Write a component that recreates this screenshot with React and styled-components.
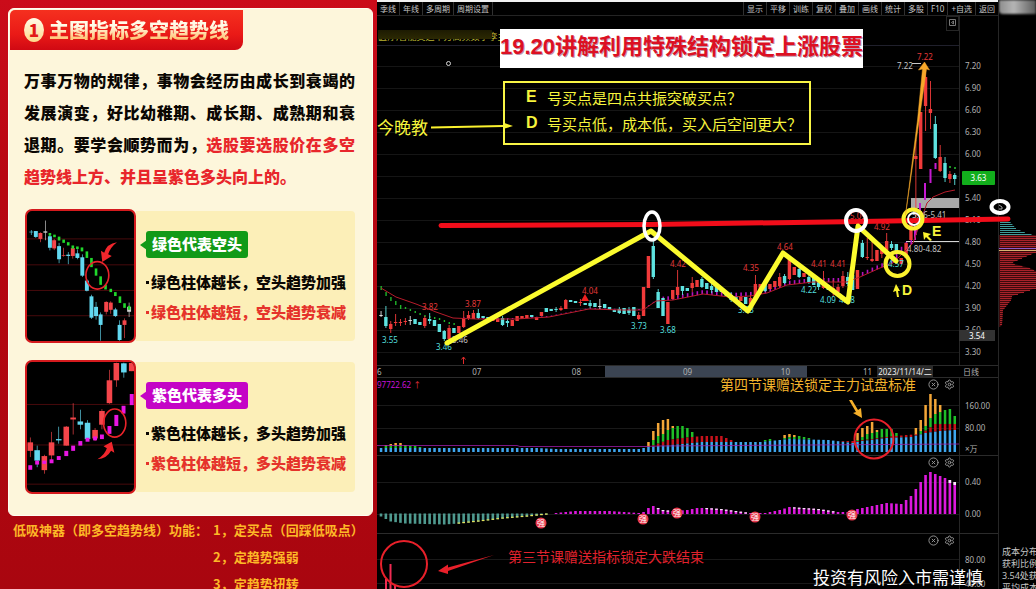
import React from "react";
import styled, { createGlobalStyle, css } from "styled-components";
import { CircleX, Settings } from "lucide-react";

const sans = '"Noto Sans", "Noto Sans CJK SC", sans-serif';
const cjk = '"Noto Sans CJK SC", "Noto Sans", sans-serif';

const GlobalStyle = createGlobalStyle`
  * { box-sizing: border-box; }
  body { margin: 0; background: #000; font-family: ${cjk}; }
  h1, h2, p, ul, ol { margin: 0; padding: 0; }
  button { font: inherit; border: 0; background: none; padding: 0; margin: 0; cursor: pointer; }
`;

const Page = styled.main`
  display: grid;
  grid-template-columns: 377px minmax(0, 1fr);
  height: 100vh;
  overflow: hidden;
`;

/* ---------- lesson column ---------- */

const Lesson = styled.section`
  padding: 8px 4px 0 8px;
  background: linear-gradient(#cb0c1a, #b80712 30%, #a9060f);
  overflow: hidden;
`;

const Card = styled.article`
  height: 508px;
  border: 1px solid #fffdf2;
  border-radius: 6px;
  background: #fdf6db;
  padding: 1px 17px 0 1px;
`;

const Heading = styled.h1`
  display: flex;
  align-items: center;
  gap: 5px;
  width: 233px;
  height: 40px;
  padding-left: 14px;
  border-radius: 5px 0 8px 0;
  background: linear-gradient(#f5301f, #ea1a17 60%, #d00913);
  font-size: 20px;
  font-weight: 900;
  line-height: 30px;
`;

const HeadingNumber = styled.span`
  width: 20px;
  height: 24px;
  border-radius: 50%;
  background: linear-gradient(#fffbe8, #ffd98c);
  color: #e31a17;
  font-size: 17px;
  line-height: 24px;
  text-align: center;
`;

const HeadingText = styled.span`
  background: linear-gradient(#fffbe8 35%, #ffc576 80%);
  background-clip: text;
  -webkit-background-clip: text;
  color: transparent;
`;

const Lead = styled.p`
  margin: 14px 0 17px 14px;
  font-size: 16px;
  line-height: 32px;
  font-weight: 900;
  color: #0b0703;
  text-align: justify;
`;

const Red = styled.strong`
  font-weight: 900;
  color: #e8262b;
`;

const Signal = styled.section`
  display: flex;
  align-items: center;
  height: 134px;
  margin: 0 0 17px 15px;
`;

const Thumb = styled.svg`
  flex: none;
  width: 111px;
  height: 134px;
  border: 2px solid #d41a1d;
  border-radius: 7px;
  background: #000;
`;

const SignalBody = styled.div`
  flex: 1;
  height: 130px;
  padding: 20px 0 0 10px;
  border-radius: 0 4px 4px 0;
  background: #fcefb8;
`;

const Tag = styled.h2`
  position: relative;
  width: 102px;
  height: 27px;
  border-radius: 3px;
  background: ${(p) => p.$color};
  color: #fff;
  font-size: 15px;
  line-height: 26px;
  font-weight: 900;
  text-align: center;
  &::before {
    content: "";
    position: absolute;
    left: -6px;
    top: 9px;
    border: solid transparent;
    border-width: 5px 7px 5px 0;
    border-right-color: ${(p) => p.$color};
  }
`;

const Bullets = styled.ul`
  margin-top: 9px;
  list-style: none;
  font-size: 15px;
  line-height: 30px;
  font-weight: 900;
  white-space: nowrap;
`;

const Bullet = styled.li`
  display: flex;
  align-items: center;
  gap: 2px;
  color: ${(p) => (p.$weak ? "#e5332b" : "#0b0703")};
  &::before {
    content: "";
    width: 3px;
    height: 3px;
    background: currentColor;
  }
`;

const Features = styled.footer`
  display: flex;
  gap: 5px;
  padding-left: 5px;
  color: #fdb827;
  font-size: 13px;
  line-height: 27px;
  font-weight: 700;
  white-space: nowrap;
`;

const FeatureList = styled.ol`
  list-style: none;
`;

/* ---------- trading terminal ---------- */

const Board = styled.section`
  position: relative;
  display: grid;
  grid-template-columns: minmax(0, 1fr) 37px;
  background: #000;
  font-family: ${sans};
  font-size: 8px;
  color: #b0b0b0;
  overflow: hidden;
`;

const Terminal = styled.div`
  display: flex;
  flex-direction: column;
  border-right: 1px solid #262626;
`;

const Toolbar = styled.nav`
  display: flex;
  justify-content: space-between;
  height: 16px;
  border-top: 2px solid #f2f2f2;
  border-bottom: 1px solid #242424;
`;

const ToolGroup = styled.div`
  display: flex;
`;

const ToolButton = styled.button`
  padding: 0 3px;
  border-${(p) => p.$side}: 1px solid #303030;
  color: #c4c4c4;
  line-height: 12px;
  white-space: nowrap;
`;

const Pane = styled.div`
  position: relative;
  flex: none;
  display: grid;
  grid-template-columns: minmax(0, 1fr) 39px;
  height: ${(p) => p.$height}px;
  border-bottom: 1px solid #2b2b2b;
`;

const Plot = styled.svg`
  display: block;
  width: 100%;
  height: 100%;
  font-family: ${sans};
  font-size: 8px;
`;

const Axis = styled.div`
  display: flex;
  flex-direction: column;
  padding: ${(p) => p.$top}px 0 0 5px;
  border-left: 1px solid #262626;
  line-height: 12px;
  overflow: hidden;
`;

const Tick = styled.span`
  flex: none;
  height: ${(p) => p.$step}px;
`;

const PriceTag = styled.span`
  position: absolute;
  right: 3px;
  top: ${(p) => p.$top}px;
  width: ${(p) => (p.$live ? 33 : 36)}px;
  height: ${(p) => (p.$live ? 14 : 11)}px;
  border-radius: ${(p) => (p.$live ? 1 : 0)}px;
  background: ${(p) => (p.$live ? "#12ae1c" : "#333")};
  color: #fff;
  line-height: ${(p) => (p.$live ? 14 : 11)}px;
  text-align: center;
`;

const Expand = styled.button`
  position: absolute;
  right: 39px;
  top: 0;
  width: 13px;
  height: 15px;
  border: 1px solid #262626;
  color: #777;
`;

const Dates = styled.div`
  flex: none;
  display: grid;
  grid-template-columns: 228px 202px minmax(0, 1fr) 39px;
  height: 12px;
  border-bottom: 1px solid #2b2b2b;
  line-height: 11px;
`;

const Months = styled.div`
  display: flex;
  justify-content: ${(p) => p.$align || "space-between"};
  gap: ${(p) => p.$gap || 0}px;
  padding: ${(p) => p.$pad};
  background: ${(p) => (p.$selected ? "#3b4452" : "transparent")};
  white-space: nowrap;
`;

const Today = styled.time`
  padding: 0 1px;
  background: #2b2b2b;
  color: #eee;
`;

const PaneTools = styled.div`
  position: absolute;
  right: 43px;
  top: 1px;
  display: flex;
  gap: 5px;
  button { width: 11px; height: 11px; color: #9a9a9a; }
  svg { display: block; }
`;

const Readout = styled.span`
  position: absolute;
  left: 0;
  top: 1px;
  color: #c713d6;
  line-height: 12px;
  b { color: #e0303a; font-weight: 400; }
`;

const Side = styled.aside`
  display: flex;
  flex-direction: column;
  overflow: hidden;
`;

const Blurred = styled.div`
  height: 14px;
  border-radius: 0 0 0 4px;
  background: linear-gradient(90deg, #8d8d8d, #b5b5b5 40%, #5c5c5c);
  filter: blur(1px);
`;

const Profile = styled.svg`
  display: block;
  width: 37px;
  height: 532px;
`;

const Stats = styled.p`
  padding-left: 3px;
  color: #c4c4c4;
  font-size: 9px;
  line-height: 12px;
  white-space: nowrap;
`;

const Overlay = styled.svg`
  position: absolute;
  left: 0;
  top: 0;
  width: 659px;
  height: 589px;
  pointer-events: none;
`;

const tones = { yellow: "#f6f43c", gold: "#f2b32c", red: "#e0222d", white: "#fff" };

const Note = styled.p`
  position: absolute;
  left: ${(p) => p.$x}px;
  top: ${(p) => p.$y}px;
  color: ${(p) => tones[p.$tone]};
  font-family: ${cjk};
  font-size: ${(p) => p.$size}px;
  line-height: 20px;
  white-space: nowrap;
  ${(p) => p.$bold && css`font-family: "Liberation Sans", sans-serif; font-weight: 700;`}
`;

const Banner = styled.h2`
  position: absolute;
  left: 123px;
  top: 29px;
  height: 39px;
  background: #fff;
  color: #dc1023;
  font-family: "Liberation Sans", "Noto Sans CJK SC", sans-serif;
  font-size: 22px;
  line-height: 35px;
  font-weight: 700;
  text-shadow: 1px 1px 0 rgba(110, 20, 70, 0.45);
  white-space: nowrap;
`;

const Ticker = styled.p`
  position: absolute;
  left: 1px;
  top: 30px;
  width: 122px;
  overflow: hidden;
  color: #b9b430;
  font-size: 9px;
  line-height: 14px;
  white-space: nowrap;
  &::after {
    content: "";
    position: absolute;
    inset: 0 8px 5px 0;
    background: linear-gradient(#1d1b02, #2c2903);
  }
`;

const Callout = styled.dl`
  position: absolute;
  left: 126px;
  top: 81px;
  width: 308px;
  height: 64px;
  display: grid;
  grid-template-columns: 21px 1fr;
  grid-auto-rows: 26px;
  margin: 0;
  padding: 2px 0 0 21px;
  border: 2px solid #f8f545;
  color: #f6f43c;
  font-size: 15px;
  line-height: 26px;
  font-family: ${cjk};
  white-space: nowrap;
  dt { font-family: "Liberation Sans", sans-serif; font-weight: 700; font-size: 16px; line-height: 24px; }
  dd { margin: 0; }
`;

/* ---------- data ---------- */

const RED = "#f03a3a";
const CYAN = "#5ee3e0";
const PITCH = 4.862;
const barX = (i) => 381 + PITCH * i;

/* tone, body top, body bottom, wick top, wick bottom */
const candles = [
  ["w", 315, 316, 311, 317], ["c", 317, 326, 306, 328], ["r", 324, 329, 321, 333], ["r", 322, 323, 314, 326],
  ["r", 322, 323, 319, 326], ["r", 321, 322, 318, 325], ["w", 320, 321, 316, 325], ["c", 319, 324], ["c", 322, 325],
  ["r", 318, 326, 316, 328], ["c", 319, 321, 313, 324], ["c", 320, 326], ["c", 324, 332], ["c", 331, 339, 330, 341],
  ["r", 328, 339, 325, 341], ["c", 328, 333], ["r", 326, 333], ["r", 318, 327, 311, 328], ["r", 315, 318, 311, 320],
  ["r", 313, 319, 310, 319], ["c", 313, 318, 309, 319], ["c", 316, 318], ["c", 317, 320], ["r", 318, 321], ["r", 319, 322],
  ["c", 318, 325, 316, 326], ["c", 321, 323, 319, 327], ["r", 320, 326], ["r", 316, 321], ["r", 316, 319], ["r", 315, 318],
  ["c", 315, 317], ["r", 317, 320], ["r", 312, 316], ["c", 308, 312], ["c", 309, 311], ["c", 309, 310, 307, 312],
  ["r", 308, 310, 306, 311], ["r", 300, 309, 299, 309], ["c", 300, 302], ["c", 301, 303], ["r", 302, 303, 299, 306],
  ["c", 303, 305], ["c", 303, 306, 300, 308], ["c", 303, 307], ["w", 306, 307, 299, 309], ["c", 304, 308], ["c", 307, 310],
  ["c", 310, 312], ["c", 309, 313, 307, 314], ["c", 308, 314], ["c", 310, 313, 307, 315], ["c", 307, 316], ["r", 315, 319, 312, 320],
  ["r", 287, 316], ["r", 256, 288], ["c", 246, 277, 240, 279], ["c", 292, 308, 289, 308], ["c", 298, 316], ["r", 302, 324],
  ["r", 290, 299], ["r", 287, 295, 270, 297], ["c", 286, 291, 286, 295], ["c", 288, 291], ["r", 283, 288, 277, 292],
  ["r", 280, 287], ["c", 279, 287, 277, 288],
  ["c", 283, 289], ["c", 286, 290, 284, 293], ["c", 287, 292], ["c", 288, 292], ["c", 292, 296], ["c", 295, 300, 292, 302],
  ["c", 296, 300], ["r", 296, 301], ["c", 297, 304], ["r", 298, 304, 295, 305], ["r", 284, 299, 275, 300], ["r", 284, 294],
  ["c", 283, 291, 280, 292], ["r", 284, 289], ["r", 281, 287], ["r", 277, 286, 273, 288], ["c", 276, 283, 274, 284],
  ["r", 259, 279, 257, 280], ["r", 267, 275], ["c", 269, 277, 267, 278], ["r", 273, 277], ["c", 277, 282, 272, 284],
  ["c", 277, 285], ["c", 281, 287, 279, 290], ["r", 284, 288, 271, 289], ["c", 285, 290], ["r", 288, 292, 280, 297],
  ["r", 287, 292, 284, 295], ["r", 276, 286, 271, 288], ["c", 277, 284, 272, 286], ["c", 275, 290], ["r", 270, 289],
  ["c", 243, 257, 240, 258], ["r", 257, 258, 238, 260], ["r", 259, 261, 240, 262], ["r", 250, 261], ["r", 248, 254, 245, 258],
  ["r", 241, 250, 233, 252], ["c", 244, 248, 241, 250], ["c", 244, 253], ["r", 258, 264], ["r", 243, 258], ["r", 223, 240],
  ["r", 156, 159, 140, 222], ["r", 112, 169], ["r", 77, 106, 70, 131], ["r", 109, 113, 81, 129], ["c", 124, 158, 116, 159],
  ["r", 157, 171, 145, 172], ["c", 163, 178, 157, 182], ["r", 174, 179, 171, 183], ["c", 175, 179, 173, 185],
];

const candleIndex = (n) => (n < 109 ? n : n + (119 - candles.length));

const average = [
  [381, 288], [396, 297], [416, 304], [436, 312], [453, 318], [476, 319], [516, 319], [549, 317], [569, 313], [589, 309],
  [623, 310], [643, 310], [656, 301], [673, 300], [703, 294], [730, 297], [750, 296], [767, 293], [787, 285], [813, 282],
  [847, 282], [860, 277], [880, 268], [893, 263], [913, 243], [920, 223], [927, 203], [933, 197], [945, 192], [955, 190],
];

const lerp = (points, x) => {
  if (x <= points[0][0]) return points[0][1];
  for (let k = 1; k < points.length; k += 1) {
    const [x1, y1] = points[k];
    const [x0, y0] = points[k - 1];
    if (x <= x1) return y0 + ((y1 - y0) * (x - x0)) / (x1 - x0);
  }
  return points[points.length - 1][1];
};

const bearDots = [288, 294, 299, 303, 307, 309, 311, 313, 315, 317, 318, 319, 320, 322, 324, 325];

const priceLabels = [
  ["3.55", 382, 343, "c"], ["3.82", 422, 310, "r"], ["3.87", 465, 307, "r"], ["3.46", 436, 350, "c"], ["3.46", 452, 343, "w"],
  ["4.04", 582, 294, "r"], ["3.73", 631, 329, "c"], ["3.68", 660, 333, "c"], ["4.42", 670, 267, "r"], ["4.35", 743, 271, "r"],
  ["4.64", 777, 250, "r"], ["3.83", 738, 313, "c"], ["4.22", 801, 293, "c"], ["4.41", 811, 267, "r"], ["4.41", 830, 267, "r"],
  ["4.09", 820, 303, "c"], ["4.08", 839, 303, "c"], ["5.09", 850, 219, "r"], ["4.92", 874, 230, "r"], ["4.57", 888, 267, "c"],
  ["7.22", 917, 60, "r"], ["7.22", 897, 69, "w"], ["5.16-5.41", 912, 218, "w"], ["4.80-4.82", 907, 252, "w"],
];
const labelTone = { c: "#54dedd", r: "#e23838", w: "#c4c4c4" };

const blueTop = [[0, 448], [32, 448], [36, 449], [53, 449], [55, 447], [57, 446], [62, 444], [66, 442], [78, 442], [84, 439], [92, 440], [97, 443], [99, 441], [104, 438], [109, 437], [112, 433], [115, 431], [118, 430]];
const redTop = [[54, 449], [59, 440], [62, 438], [66, 436], [70, 436], [73, 442], [90, 441], [98, 441], [104, 437], [108, 435], [111, 434], [114, 424], [118, 424]];
const hasRed = (i) => (i >= 55 && i <= 73) || i >= 90;
const greenTop = { 1: 446, 2: 446, 3: 446, 4: 446, 5: 446, 6: 446, 7: 446, 8: 447, 56: 440, 57: 436, 58: 434, 59: 430, 60: 428, 61: 426, 62: 426, 63: 428, 64: 432, 79: 440, 80: 439, 83: 438, 84: 437, 85: 437, 86: 436, 87: 437, 88: 438, 98: 440, 99: 437, 100: 434, 101: 433, 102: 432, 103: 429, 104: 429, 105: 429, 106: 433, 110: 435, 111: 431, 112: 426, 113: 418, 114: 414, 115: 412, 116: 410, 117: 409, 118: 416 };
const goldTop = { 1: 445, 2: 444, 3: 443, 4: 443, 5: 445, 6: 446, 55: 442, 56: 431, 57: 423, 58: 420, 59: 419, 60: 426, 83: 435, 84: 434, 85: 435, 98: 433, 99: 428, 100: 426, 101: 422, 102: 430, 110: 428, 111: 420, 112: 405, 113: 394, 114: 399, 115: 405 };

const momentum = [[0, -3], [2, -8], [5, -10], [13, -11], [16, -10], [20, -8], [25, -5], [30, -3], [34, -1], [36, 1], [40, 3], [47, 3], [53, 1], [54, 2], [55, 6], [56, 8], [58, 4], [60, 3], [63, 4], [65, 6], [67, 6], [70, 5], [73, 3], [76, 1], [79, 1], [82, 4], [84, 7], [90, 5], [94, 2], [97, 2], [98, 5], [101, 8], [104, 11], [107, 10], [109, 18], [111, 32], [112, 39], [113, 42], [115, 38], [118, 32]];

const indexes = Array.from({ length: 119 }, (_, i) => i);

const profileEdge = [[218, 1], [219, 9], [228, 17], [233, 28], [235, 37], [252, 37], [258, 23], [263, 12], [268, 31], [271, 37], [288, 37], [293, 22], [296, 13], [300, 12], [310, 4], [325, 3], [327, 1]];
const profileRows = Array.from({ length: 53 }, (_, k) => 220 + k * 2);

/* thumbnails: tone, x, body top, body bottom, wick top, wick bottom */
const bearCandles = [
  ["c", 91, 96, 98, 91, 106], ["c", 105, 94, 112, 94, 115], ["r", 119, 100, 118, 98, 128], ["w", 134, 95, 99, 62, 122],
  ["c", 148, 110, 145, 100, 153], ["r", 161, 122, 147, 118, 152], ["c", 176, 140, 180, 130, 192], ["r", 190, 168, 170, 145, 172],
  ["c", 204, 166, 170, 158, 195], ["r", 218, 146, 170, 140, 178], ["c", 232, 162, 176, 150, 180], ["c", 247, 174, 230, 165, 234],
  ["c", 261, 245, 276, 240, 278], ["c", 275, 293, 358, 288, 362], ["c", 289, 325, 353, 310, 364], ["c", 303, 348, 380, 342, 428],
  ["r", 320, 310, 340, 308, 348], ["r", 334, 312, 334, 308, 346], ["c", 348, 333, 353, 328, 356], ["c", 361, 380, 426, 366, 428],
  ["r", 376, 366, 380, 360, 420], ["w", 390, 325, 340, 312, 356],
];
const bearTrail = [[148, 100, 8], [162, 105, 8], [176, 111, 12], [190, 120, 10], [204, 128, 10], [218, 138, 10], [232, 141, 8], [246, 144, 12], [261, 156, 20], [275, 176, 28], [289, 208, 22], [303, 232, 26], [318, 258, 14], [334, 270, 10], [348, 280, 12], [362, 293, 20], [376, 314, 14], [390, 322, 12]];
const bullCandles = [
  ["r", 88, 280, 306, 265, 325], ["c", 109, 304, 336, 290, 356], ["r", 131, 322, 365, 318, 376], ["r", 153, 280, 320, 248, 336],
  ["c", 175, 270, 274, 232, 284], ["r", 198, 232, 290, 230, 290], ["r", 219, 204, 210, 160, 256], ["c", 241, 216, 226, 180, 240],
  ["c", 263, 220, 270, 212, 274], ["r", 286, 242, 268, 236, 276], ["r", 307, 184, 226, 178, 240], ["r", 330, 90, 160, 58, 162],
  ["r", 351, 37, 90, 36, 110], ["c", 374, 38, 66, 36, 82], ["r", 398, 37, 62, 36, 62],
];
const bullTrail = [[88, 350, 14], [109, 336, 12], [131, 336, 10], [153, 332, 12], [175, 322, 12], [198, 306, 16], [219, 290, 16], [241, 276, 14], [263, 266, 12], [286, 262, 12], [307, 256, 14], [330, 230, 24], [351, 196, 34], [373, 168, 24], [398, 132, 34]];

const tone = { r: "#f4454a", c: "#62d8f0", w: "#d0d0d0" };

/* ---------- parts ---------- */

function SignalChart({ label, viewBox, grid, data, body, trail, trailWidth, trailColor, children }) {
  return (
    <Thumb viewBox={viewBox} preserveAspectRatio="none" role="img" aria-label={label}>
      {grid.map((y) => <path key={y} d={`M75 ${y}H408`} stroke="#6d1013" strokeWidth="2" />)}
      {data.map(([t, x, a, b, hi, lo]) => (
        <g key={x} fill={tone[t]}>
          <rect x={x - 1} y={hi} width="2" height={lo - hi} />
          <rect x={x - body / 2} y={a} width={body} height={b - a} />
        </g>
      ))}
      {trail.map(([x, y, h]) => <rect key={x} x={x - trailWidth / 2} y={y} width={trailWidth} height={h} fill={trailColor} />)}
      {children}
    </Thumb>
  );
}

function Tools() {
  return (
    <PaneTools>
      <button type="button" aria-label="关闭指标"><CircleX size={11} strokeWidth={2} /></button>
      <button type="button" aria-label="指标设置"><Settings size={11} strokeWidth={2} /></button>
    </PaneTools>
  );
}

function PricePlot() {
  return (
    <Plot viewBox="377 16 582 350" preserveAspectRatio="xMinYMin slice">
      {Array.from({ length: 14 }, (_, k) => <path key={k} d={`M377 ${66.5 + k * 22}H959`} stroke="#151515" />)}
      <path d="M377 45.5H959" stroke="#20202c" />
      <rect x="911" y="198" width="48" height="10" fill="#a9a9a9" />
      <path d="M906 241.5H959" stroke="#d6d6d6" />
      {bearDots.map((y, i) => <rect key={i} x={barX(i) - 0.5} y={y - 2} width="1.4" height={i < 5 ? 4 : 2} fill="#1fb52a" />)}
      {indexes.slice(17, 111).map((i) => {
        const h = i > 104 ? 8 : i > 56 ? 4 : 1;
        return <rect key={i} x={barX(i) - 0.5} y={lerp(average, barX(i)) - h} width="1.6" height={h} fill="#b312bf" />;
      })}
      <path d="M925 183V200M930.500 169V183M935.500 163V169M920 203V221M915 226V240" stroke="#c51ad0" strokeWidth="2" />
      <path d="M945 165V167M950 166V168M955 167V169" stroke="#27c532" strokeWidth="1.500" />
      {candles.map(([t, a, b, hi = a, lo = b], n) => {
        const x = barX(candleIndex(n));
        const fill = t === "r" ? RED : t === "c" ? CYAN : "#ddd";
        return (
          <g key={n} fill={fill}>
            <rect x={x - 0.4} y={hi} width="0.9" height={lo - hi} />
            <rect x={x - 1.7} y={a} width="3.4" height={b - a} />
          </g>
        );
      })}
      <polyline points={average.map((p) => p.join(",")).join(" ")} fill="none" stroke="#b71c2b" />
      <path d="M585 294l4 7h-8z" fill="#f02020" />
      <path d="M463.500 364V357M461.500 359.500L463.500 357L465.500 359.500" fill="none" stroke="#e02a2a" />
      <circle cx="448.500" cy="63.500" r="2" fill="none" stroke="#d4d4d4" />
      <path d="M912 63.500H921" stroke="#c8c8c8" />
      {priceLabels.map(([text, x, y, t]) => <text key={`${text}${x}`} x={x} y={y} fill={labelTone[t]}>{text}</text>)}
    </Plot>
  );
}

function VolumePlot() {
  return (
    <Plot viewBox="377 378 582 77" preserveAspectRatio="xMinYMin slice">
      <path d="M377 405.500H959M377 428.500H959" stroke="#191919" />
      {indexes.map((i) => {
        const x = barX(i) - 1.2;
        const blue = lerp(blueTop, i);
        const red = hasRed(i) ? Math.min(blue, lerp(redTop, i)) : blue;
        const green = greenTop[i] || red;
        const gold = goldTop[i] || green;
        return (
          <g key={i}>
            <rect x={x} y={gold} width="2.5" height={Math.max(0, green - gold)} fill="#f3a638" />
            <rect x={x} y={green} width="2.5" height={Math.max(0, red - green)} fill="#1fbf28" />
            <rect x={x} y={red} width="2.5" height={Math.max(0, blue - red)} fill="#c8131c" />
            <rect x={x} y={blue} width="2.5" height={452 - blue} fill="#3ea6ee" />
          </g>
        );
      })}
      <path d="M377 445.500H517L520 446.500H645L660 446L959 444" fill="none" stroke="#9b1aa5" strokeOpacity="0.8" />
    </Plot>
  );
}

const strongMarks = [[541, 523], [643, 519], [677, 513], [755, 517], [852, 515]];

function MomentumPlot() {
  return (
    <Plot viewBox="377 456 582 77" preserveAspectRatio="xMinYMin slice">
      <path d="M377 482.500H959M377 514.500H959" stroke="#191919" />
      {indexes.map((i) => {
        const v = lerp(momentum, i);
        const x = barX(i) - 1.3;
        const falling = i > 56 && i < 117 ? lerp(momentum, i + 1) < v && v < 7 : i >= 117;
        return v < 0 ? (
          <g key={i}>
            <rect x={x} y="513.500" width="2.6" height={-v} fill="#4f9a8f" />
            {i > 15 && <rect x={x} y={512.5 - v} width="2.6" height="1.2" fill="#e6e35a" />}
          </g>
        ) : (
          <g key={i}>
            <rect x={x} y={514 - v} width="2.6" height={v} fill="#dc18dc" />
            {falling && <rect x={x} y={514 - v} width="2.6" height={i > 116 ? 3 : 1.2} fill="#f6e9f6" />}
          </g>
        );
      })}
      {strongMarks.map(([x, y]) => (
        <g key={x}>
          <circle cx={x} cy={y} r="5.500" fill="#e8384b" />
          <text x={x} y={y + 3} fill="#fff" textAnchor="middle" fontFamily="Noto Sans CJK SC" fontSize="8">强</text>
        </g>
      ))}
    </Plot>
  );
}

const prices = ["7.20", "6.90", "6.60", "6.30", "6.00", "", "5.40", "5.10", "4.80", "4.50", "4.20", "3.90", "3.60", "3.30"];

export default function App() {
  return (
    <>
      <GlobalStyle />
      <Page>
        <Lesson>
          <Card>
            <Heading>
              <HeadingNumber>1</HeadingNumber>
              <HeadingText>主图指标多空趋势线</HeadingText>
            </Heading>
            <Lead>
              万事万物的规律，事物会经历由成长到衰竭的发展演变，好比幼稚期、成长期、成熟期和衰退期。要学会顺势而为，<Red>选股要选股价在多空趋势线上方、并且呈紫色多头向上的。</Red>
            </Lead>
            <Signal>
              <SignalChart label="绿色柱体走势" viewBox="78 33 327 396" grid={[118, 197, 275, 352]} data={bearCandles} body={12} trail={bearTrail} trailWidth={8} trailColor="#20d82c">
                <ellipse cx="293" cy="229" rx="35" ry="42" fill="none" stroke="#e8232a" strokeWidth="5" />
                <path d="M353 128Q322 132 314 160L304 154L308 188L337 170L326 165Q332 144 353 128Z" fill="#f1262c" />
              </SignalChart>
              <SignalBody>
                <Tag $color="#129a17">绿色代表空头</Tag>
                <Bullets>
                  <Bullet>绿色柱体越长，空头趋势加强</Bullet>
                  <Bullet $weak>绿色柱体越短，空头趋势衰减</Bullet>
                </Bullets>
              </SignalBody>
            </Signal>
            <Signal>
              <SignalChart label="紫色柱体走势" viewBox="78 34 327 398" grid={[164, 288, 408]} data={bullCandles} body={17} trail={bullTrail} trailWidth={12} trailColor="#e916e4">
                <ellipse cx="346" cy="221" rx="34" ry="43" fill="none" stroke="#e8232a" strokeWidth="5" />
                <path d="M293 332Q316 318 322 298L312 292L337 278L345 312L335 306Q322 330 293 332Z" fill="#f1262c" />
              </SignalChart>
              <SignalBody>
                <Tag $color="#c404c6">紫色代表多头</Tag>
                <Bullets>
                  <Bullet>紫色柱体越长，多头趋势加强</Bullet>
                  <Bullet $weak>紫色柱体越短，多头趋势衰减</Bullet>
                </Bullets>
              </SignalBody>
            </Signal>
          </Card>
          <Features>
            <span>低吸神器（即多空趋势线）功能：</span>
            <FeatureList>
              <li>1，定买点（回踩低吸点）</li>
              <li>2，定趋势强弱</li>
              <li>3，定趋势扭转</li>
            </FeatureList>
          </Features>
        </Lesson>

        <Board>
          <Terminal>
            <Toolbar>
              <ToolGroup>
                {["季线", "年线", "多周期", "周期设置"].map((t) => <ToolButton key={t} type="button" $side="right">{t}</ToolButton>)}
              </ToolGroup>
              <ToolGroup>
                {["显示", "平移", "训练", "复权", "叠加", "画线", "统计", "多股", "F10", "+自选", "返回"].map((t) => <ToolButton key={t} type="button" $side="left">{t}</ToolButton>)}
              </ToolGroup>
            </Toolbar>
            <Pane $height={350}>
              <PricePlot />
              <Axis $top={44}>
                {prices.map((p, k) => <Tick key={k} $step={22}>{p}</Tick>)}
              </Axis>
              <Expand type="button" aria-label="展开">
                <svg width="9" height="9" viewBox="0 0 9 9" fill="none" stroke="currentColor"><path d="M1.500 1.500h6v6h-6zM5.500 3v3l-2-1.500z" /></svg>
              </Expand>
              <PriceTag $top={155} $live>3.63</PriceTag>
              <PriceTag $top={314}>3.54</PriceTag>
            </Pane>
            <Dates>
              <Months $pad="0 24px 0 0"><span>6</span><span>07</span><span>08</span></Months>
              <Months $pad="0 17px 0 78px" $selected><span>09</span><span>10</span></Months>
              <Months $pad="0 0 0 56px" $align="flex-start" $gap={5}><span>11</span><Today>2023/11/14/二</Today></Months>
              <Months $pad="0 0 0 4px">日线</Months>
            </Dates>
            <Pane $height={78}>
              <VolumePlot />
              <Axis $top={22}><Tick $step={22}>160.00</Tick><Tick $step={21}>80.00</Tick><Tick $step={12}>×万</Tick></Axis>
              <Readout>97722.62 <b>↑</b></Readout>
              <Tools />
            </Pane>
            <Pane $height={78}>
              <MomentumPlot />
              <Axis $top={20}><Tick $step={32}>0.40</Tick><Tick $step={12}>0.00</Tick></Axis>
              <Tools />
            </Pane>
            <Pane $height={60}>
              <Plot viewBox="377 534 582 59" preserveAspectRatio="xMinYMin slice">
                <path d="M377 559.500H959M377 583.500H959" stroke="#191919" />
                <path d="M386 589V579M390.500 589V564M395 589V586" stroke="#ef2a52" strokeWidth="2" />
              </Plot>
              <Axis $top={20}><Tick $step={24}>80.00</Tick><Tick $step={12}>40.00</Tick></Axis>
              <Tools />
            </Pane>
          </Terminal>
          <Side>
            <Blurred />
            <Profile viewBox="0 14 37 532" aria-label="筹码分布">
              <path d={`M0 235${profileEdge.filter(([y]) => y >= 235).map(([y, x]) => `L${x} ${y}`).join("")}L0 327Z`} fill="#3a0a0c" />
              {profileRows.map((y) => (
                <path key={y} d={`M1 ${y + 0.5}H${lerp(profileEdge, y)}`} stroke={y < 235 ? "#3f9a9a" : "#a8222a"} />
              ))}
              <path d="M0 248.500H37" stroke="#8d5ac8" />
              <path d="M0 250.500H37" stroke="#d8b070" />
            </Profile>
            <Stats>成本分布<br />获利比例<br />3.54处获<br />平均成本</Stats>
          </Side>

          <Ticker>医疗,智能交运率方高频数字孪主题</Ticker>
          <Overlay viewBox="377 0 659 589" aria-hidden="true">
            <path d="M441 225.500L650 224.500L860 221.500L1008 219" fill="none" stroke="#f20d1a" strokeWidth="5" strokeLinecap="round" />
            <polyline points="447,343 651,231 748,311 783,253 848,302 858,226 896,261" fill="none" stroke="#fbfb2e" strokeWidth="5" strokeLinecap="round" strokeLinejoin="round" />
            <g fill="none" stroke="#fff" strokeWidth="4">
              <ellipse cx="652" cy="226" rx="8" ry="14" strokeWidth="3.500" />
              <ellipse cx="856" cy="220.500" rx="10" ry="10.500" />
              <ellipse cx="1000" cy="207" rx="8.500" ry="6" />
            </g>
            <path d="M999 205l3 2v2h-3" fill="none" stroke="#aaa" />
            <circle cx="914" cy="219" r="6" fill="none" stroke="#fff" strokeWidth="2" />
            <g fill="none" stroke="#fbf22e" strokeWidth="4">
              <circle cx="913" cy="219" r="9.500" />
              <circle cx="897.500" cy="264" r="12" />
            </g>
            <path d="M905.500 215L917.500 120L922.500 69L918.500 70L924.500 62L929.500 70L926.500 69L919 121Z" fill="#f6a82a" stroke="#f6a82a" strokeWidth="0.500" />
            <g fill="#fbf22e">
              <path d="M923 232l8 2l-3 2l4 4l-2 1l-4-4l-2 3z" />
              <path d="M896 284l4 7l-2 0l1 6h-2l-1-6l-3 1z" />
              <path d="M431 126.500L503 125V122.500L513 126L503 129V127L431 128.500Z" />
            </g>
            <path d="M849 400l3 0l6 10l3-2l1 10l-9-5l3-1z" fill="#f6b02a" />
            <circle cx="874" cy="439" r="19.500" fill="none" stroke="#e8202a" strokeWidth="2" />
            <circle cx="404" cy="564" r="23" fill="none" stroke="#e8202a" strokeWidth="2" />
            <path d="M494 555L448 567.500V564.500L438 571L448 574V571Z" fill="#e8202a" />
          </Overlay>
          <Banner>19.20讲解利用特殊结构锁定上涨股票</Banner>
          <Callout>
            <dt>E</dt><dd>号买点是四点共振突破买点？</dd>
            <dt>D</dt><dd>号买点低，成本低，买入后空间更大？</dd>
          </Callout>
          <Note $x={0} $y={117} $size={17} $tone="yellow">今晚教</Note>
          <Note $x={555} $y={221} $size={14} $tone="yellow" $bold>E</Note>
          <Note $x={525} $y={280} $size={14} $tone="yellow" $bold>D</Note>
          <Note $x={343} $y={374} $size={14} $tone="gold">第四节课赠送锁定主力试盘标准</Note>
          <Note $x={131} $y={546} $size={14} $tone="red">第三节课赠送指标锁定大跌结束</Note>
          <Note $x={436} $y={567} $size={17} $tone="white">投资有风险入市需谨慎</Note>
        </Board>
      </Page>
    </>
  );
}
